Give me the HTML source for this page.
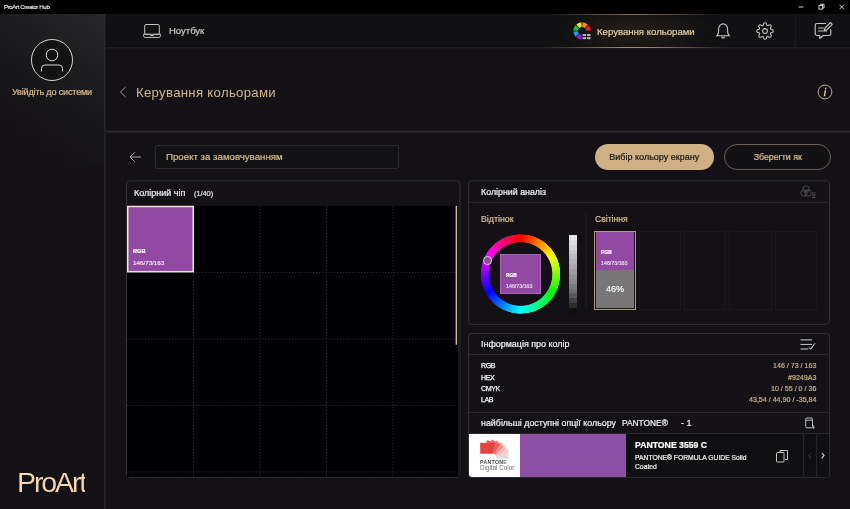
<!DOCTYPE html>
<html lang="uk">
<head>
<meta charset="utf-8">
<title>ProArt Creator Hub</title>
<style>
*{margin:0;padding:0;box-sizing:border-box}
html,body{width:850px;height:509px;overflow:hidden;background:#131116;font-family:"Liberation Sans",sans-serif;color:#e8e8e8}
.abs{position:absolute}
.t{position:absolute;white-space:nowrap;line-height:1;will-change:transform;-webkit-text-stroke:.22px currentColor}
#titlebar{left:0;top:0;width:850px;height:14px;background:#000}
#sidebar{left:0;top:14px;width:104.500px;height:495px;background:linear-gradient(215deg,#282729 0%,#1e1d1f 28%,#171618 55%,#141216 80%) 0 0/104.500px 150px no-repeat,#141216}
#nav{left:105px;top:14px;width:745px;height:34px;background:#111113}
#main{left:105px;top:48px;width:745px;height:461px;background:#131116}
.gold{color:#d8bc8f}
.panel{position:absolute;border:1px solid #333236;border-radius:4px;background:#131116}
.lab{font-size:7.100px;letter-spacing:-.42px;color:#f2f2f2;-webkit-text-stroke:.25px #f2f2f2}
.val{right:33.300px;font-size:7.100px;color:#c9ad80;text-align:right}
</style>
</head>
<body>
<div class="abs" id="titlebar"></div>
<div class="t" style="left:3.800px;top:4.300px;font-size:6.200px;letter-spacing:-.42px;color:#f2f2f2;-webkit-text-stroke:.1px #f2f2f2">ProArt Creator Hub</div>
<!-- window controls -->
<svg class="abs" style="left:790px;top:0" width="60" height="14" viewBox="0 0 60 14" fill="none" stroke="#cfcfcf" stroke-width="1">
  <path d="M8.5 7h5"/>
  <rect x="29" y="5.5" width="3.6" height="3.6"/><path d="M30.4 5.5v-1.2h3.6v3.6h-1.3"/>
  <path d="M49.5 4.8l4.4 4.4M53.9 4.8l-4.4 4.4"/>
</svg>

<div class="abs" id="sidebar"></div>
<div class="abs" id="nav"></div>
<div class="abs" id="main"></div>
<svg class="abs" style="left:0;top:0" width="850" height="509" viewBox="0 0 850 509" fill="none">
  <path d="M104.900 14V509" stroke="#333135"/>
  <path d="M105.500 47.800H850" stroke="#29282b"/>
  <path d="M105.500 131.700H850" stroke="#2d2b30" stroke-width="1.700"/>
  <path d="M795.300 14v33.500" stroke="#1f1e21"/>
  <g fill="#131116" stroke="#343337">
    <rect x="126.500" y="180.900" width="333.400" height="296.500" rx="3"/>
    <rect x="468.600" y="180.900" width="360.900" height="143.400" rx="3"/>
    <rect x="468.600" y="333.400" width="360.800" height="143.900" rx="3"/>
  </g>
  <g stroke="#2c2b2f">
    <path d="M469 202.300H829"/>
    <path d="M469 354.500H829"/>
    <path d="M469 412.400H829"/>
    <path d="M469 433.600H829"/>
    <path d="M585.900 212.700v95.500" stroke="#232126"/>
  </g>
</svg>

<!-- sidebar avatar -->
<svg class="abs" style="left:30px;top:38px" width="44" height="44" viewBox="0 0 44 44" fill="none" stroke="#d9d5cf" stroke-width="1">
  <circle cx="22" cy="22" r="20.500" fill="#121113"/>
  <circle cx="22" cy="17" r="5.800"/>
  <path d="M11.5 33.5v-3.2a3.3 3.3 0 0 1 3.3-3.3h14.4a3.3 3.3 0 0 1 3.3 3.3v3.2"/>
</svg>
<div class="t gold" id="login" style="left:11px;top:88px;font-size:9.100px;letter-spacing:-.18px;width:82px;text-align:center">Увійдіть до системи</div>
<div class="t" id="proart" style="left:17px;top:467.900px;font-size:28.500px;letter-spacing:-2.100px;-webkit-text-stroke:0;background:linear-gradient(#f6dcbc,#f1cfa6);-webkit-background-clip:text;background-clip:text;color:transparent">ProArt</div>

<!-- nav -->
<svg class="abs" style="left:142px;top:23px" width="20" height="16" viewBox="0 0 20 16" fill="none" stroke="#c2c2c2" stroke-width="1">
  <rect x="2.700" y="1.500" width="14.600" height="9.800" rx="1.200"/>
  <path d="M1.500 11.300h6l1 1.200h3l1-1.200h6v1.300a1.800 1.800 0 0 1-1.800 1.800H3.300a1.800 1.800 0 0 1-1.800-1.800z"/>
</svg>
<div class="t" id="notebook" style="left:169px;top:26.200px;font-size:9.500px;color:#cacaca">Ноутбук</div>

<!-- active tab -->
<div class="abs" style="left:555px;top:14px;width:160px;height:34px;background:radial-gradient(ellipse 80px 26px at 50% 50%,rgba(70,55,35,.35),rgba(70,55,35,0) 100%)"></div>
<div class="abs" style="left:545px;top:13.5px;width:180px;height:1px;background:linear-gradient(90deg,rgba(200,165,110,0),rgba(200,165,110,.6) 45%,rgba(200,165,110,.6) 55%,rgba(200,165,110,0))"></div>
<div class="abs" style="left:545px;top:47px;width:180px;height:1px;background:linear-gradient(90deg,rgba(200,165,110,0),rgba(200,165,110,.8) 45%,rgba(200,165,110,.8) 55%,rgba(200,165,110,0))"></div>
<svg class="abs" style="left:570.900px;top:19.800px" width="22" height="22" viewBox="0 0 22 22">
  <g fill="none" stroke-width="4.600">
<path d="M11.39 4.61A6.4 6.4 0 0 1 15.24 6.21" stroke="#f28c1e"/>
<path d="M15.79 6.76A6.4 6.4 0 0 1 17.39 10.61" stroke="#e0222a"/>
<path d="M10.61 17.39A6.4 6.4 0 0 1 6.76 15.79" stroke="#9a1fd0"/>
<path d="M6.21 15.24A6.4 6.4 0 0 1 4.61 11.39" stroke="#1f9be6"/>
<path d="M4.61 10.61A6.4 6.4 0 0 1 6.21 6.76" stroke="#1fc12a"/>
<path d="M6.76 6.21A6.4 6.4 0 0 1 10.61 4.61" stroke="#f4dc25"/>
  </g>
  <g fill="#b4b4b4">
    <rect x="11.600" y="14" width="3.500" height="2.100"/><rect x="16" y="14" width="3.500" height="2.100"/>
    <rect x="11.600" y="17.100" width="3.500" height="2.100"/><rect x="16" y="17.100" width="3.500" height="2.100"/>
  </g>
</svg>
<div class="t gold" id="tabtxt" style="left:597px;top:26.600px;font-size:9.600px;color:#e2cba2">Керування кольорами</div>

<!-- bell -->
<svg class="abs" style="left:715px;top:20.800px" width="16.200" height="19.400" preserveAspectRatio="none" viewBox="0 0 18 20" fill="none" stroke="#c6c6c6" stroke-width="1.200">
  <path d="M2.2 15.2c1.3-1.2 1.8-2.6 1.8-4.8V8a5 5 0 0 1 10 0v2.400c0 2.200.5 3.600 1.800 4.800z"/>
  <path d="M7.300 16.300a1.800 1.800 0 0 0 3.400 0"/>
</svg>
<!-- gear -->
<svg class="abs" style="left:756px;top:22px" width="18" height="18" viewBox="0 0 24 24" fill="none" stroke="#c6c6c6" stroke-width="1.400" stroke-linejoin="round">
  <circle cx="12" cy="12" r="3.2"/>
  <path d="M19.4 15a1.650 1.650 0 0 0 .330 1.820l.060.060a2 2 0 1 1-2.830 2.830l-.060-.060a1.650 1.650 0 0 0-1.820-.330 1.650 1.650 0 0 0-1 1.510V21a2 2 0 0 1-4 0v-.090A1.650 1.650 0 0 0 9 19.400a1.650 1.650 0 0 0-1.820.330l-.060.060a2 2 0 1 1-2.830-2.830l.060-.060a1.650 1.650 0 0 0 .330-1.820 1.650 1.650 0 0 0-1.510-1H3a2 2 0 0 1 0-4h.090A1.650 1.650 0 0 0 4.600 9a1.650 1.650 0 0 0-.330-1.820l-.060-.060a2 2 0 1 1 2.830-2.830l.060.060a1.650 1.650 0 0 0 1.820.330H9a1.650 1.650 0 0 0 1-1.510V3a2 2 0 0 1 4 0v.090a1.650 1.650 0 0 0 1 1.510 1.650 1.650 0 0 0 1.820-.330l.060-.060a2 2 0 1 1 2.830 2.830l-.060.060a1.650 1.650 0 0 0-.330 1.820V9a1.650 1.650 0 0 0 1.510 1H21a2 2 0 0 1 0 4h-.090a1.650 1.650 0 0 0-1.510 1z"/>
</svg>
<!-- feedback -->
<svg class="abs" style="left:813px;top:20px" width="22" height="21" viewBox="0 0 22 21" fill="none" stroke="#c6c6c6" stroke-width="1.1" stroke-linejoin="round" stroke-linecap="round">
  <path d="M12.500 3.500H4a1.800 1.800 0 0 0-1.800 1.800v8.400A1.800 1.800 0 0 0 4 15.500h2.800v3l3.400-3H16a1.800 1.800 0 0 0 1.800-1.800V9.500"/>
  <path d="M5.500 8h5M5.500 11h8"/>
  <path d="M17.500 2.500l1.800 1.800-5.600 5.600-2.300.5.500-2.300z"/>
</svg>

<!-- section title -->
<svg class="abs" style="left:119px;top:86px" width="8" height="12" viewBox="0 0 8 12" fill="none" stroke="#9b9b9b" stroke-width="1"><path d="M6.800 0.800L1.500 6l5.300 5.200"/></svg>
<div class="t gold" id="h1" style="left:136px;top:86.200px;font-size:13.200px;letter-spacing:.3px;-webkit-text-stroke:0;color:#d2b78b">Керування кольорами</div>
<svg class="abs" style="left:817.300px;top:83.600px" width="16" height="16" viewBox="0 0 16 16" fill="none" stroke="#b9aa92" stroke-width="1"><circle cx="8" cy="8" r="6.900"/><path d="M8.700 4.100l-.1.700M8.300 6.600l-.8 5" stroke="#dcc8a4" stroke-width="1.400" stroke-linecap="round"/></svg>

<!-- project row -->
<svg class="abs" style="left:129px;top:151px" width="13" height="12" viewBox="0 0 13 12" fill="none" stroke="#a2a2a2" stroke-width="1"><path d="M12 6H1.200M5.800 1.200L1 6l4.800 4.800"/></svg>
<div class="abs" style="left:155px;top:145px;width:244px;height:24px;border:1px solid #2b2a2e;border-radius:2px;background:#121114"></div>
<div class="t gold" id="proj" style="left:166px;top:152px;font-size:9.7px">Проект за замовчуванням</div>

<div class="abs" id="btn1" style="left:595px;top:144px;width:118.500px;height:26px;border-radius:13px;background:#cfb085"></div>
<div class="t" id="btn1t" style="left:595px;top:152.800px;width:118.500px;text-align:center;font-size:9.0px;color:#1c1a18">Вибір кольору екрану</div>
<div class="abs" id="btn2" style="left:723.500px;top:144px;width:107.500px;height:26px;border-radius:13px;border:1px solid #6d6252;background:#111012"></div>
<div class="t gold" id="btn2t" style="left:723.500px;top:152.800px;width:107.500px;text-align:center;font-size:8.8px">Зберегти як</div>

<!-- left panel -->
<div class="t" id="chipT" style="left:134.300px;top:188.800px;font-size:9.0px;color:#f0f0f0">Колірний чіп</div>
<div class="t" id="chipN" style="left:194px;top:189.800px;font-size:7.300px;color:#e0e0e0">(1/40)</div>
<div class="abs" id="grid" style="left:127px;top:205.500px;width:330.500px;height:271.500px;background:#010002"></div>
<svg class="abs" style="left:127px;top:205.500px" width="333" height="272" viewBox="0 0 333 272" fill="none" stroke="#262628" stroke-width="1" stroke-dasharray="1.500 1.500">
  <path d="M66.500 0v273M133 0v273M199.500 0v273M266 0v273"/>
  <path d="M0 66.500h329M0 133h329M0 199.500h329M0 266h329"/>
</svg>
<div class="abs" style="left:457.500px;top:205.500px;width:2.500px;height:271.500px;background:#181c1c"></div>
<svg class="abs" style="left:450px;top:200px" width="12" height="150" viewBox="0 0 12 150"><rect x="5.600" y="6" width="1.500" height="138.700" fill="#d3bd9a"/></svg>
<svg class="abs" style="left:120px;top:200px" width="80" height="80" viewBox="0 0 80 80"><rect x="7.750" y="6.500" width="65.500" height="65.200" fill="#9249a3" stroke="#e9e1d3" stroke-width="1.500"/></svg>
<div class="t" style="left:132.500px;top:249.200px;font-size:5.600px;font-weight:bold;color:#fff">RGB</div>
<div class="t" style="left:132.500px;top:260px;font-size:6.250px;color:#eadcf0">146/73/163</div>

<!-- analysis panel -->
<div class="t" id="anT" style="left:481.300px;top:187.900px;font-size:8.85px;color:#f0f0f0">Колірний аналіз</div>
<svg class="abs" style="left:800px;top:185px" width="16" height="14" viewBox="0 0 16 14" fill="none" stroke="#4c4b4f" stroke-width="1">
  <circle cx="6" cy="4" r="3.200"/><circle cx="4" cy="8" r="3.200"/><circle cx="8" cy="8" r="3.200"/>
  <path d="M12 8h3.500M12 10.200h3.500M12 12.400h3.500" stroke-width="1.200"/>
</svg>
<div class="t gold" id="hueT" style="left:481px;top:215.200px;font-size:8.8px">Відтінок</div>
<div class="t gold" id="lumT" style="left:595px;top:215.200px;font-size:8.6px">Світіння</div>

<div class="abs" id="wheel" style="left:480.300px;top:233.800px;width:80.600px;height:80.600px;border-radius:50%;background:conic-gradient(#ff0000,#ffff00,#00ff00,#00ffff,#0000ff,#ff00ff,#ff0000);-webkit-mask:radial-gradient(circle closest-side,transparent 0,transparent 78.500%,#000 80.500%,#000 98.500%,transparent 100%);mask:radial-gradient(circle closest-side,transparent 0,transparent 78.500%,#000 80.500%,#000 98.500%,transparent 100%)"></div>
<div class="abs" style="left:500.200px;top:253.600px;width:40.600px;height:40.500px;background:#9249a3;border:1px solid #a766b6"></div>
<div class="t" style="left:505.700px;top:274.300px;font-size:4.800px;font-weight:bold;color:#fff">RGB</div>
<div class="t" style="left:505.500px;top:283.700px;font-size:5.300px;color:#e2cfe8">146/73/163</div>
<div class="abs" style="left:483px;top:256.400px;width:8.800px;height:8.800px;border-radius:50%;background:#9249a3;border:1px solid #e6d8ea"></div>
<div class="abs" id="graybar" style="left:569.400px;top:235px;width:8px;height:78px;background:linear-gradient(#e6e6e6 0 6.25%,#dcdcdc 0 12.5%,#d2d2d2 0 18.75%,#c8c8c8 0 25%,#bdbdbd 0 31.25%,#b3b3b3 0 37.5%,#a9a9a9 0 43.75%,#9e9e9e 0 50%,#939393 0 56.25%,#888 0 62.5%,#7b7b7b 0 68.75%,#6c6c6c 0 75%,#585858 0 81.25%,#424242 0 87.5%,#2a2a2a 0 93.75%,#0e0e0e 0 100%)"></div>

<div class="abs" style="left:594.200px;top:230.700px;width:41.700px;height:79.200px;border:1px solid #b39d78;background:#17161a"></div>
<div class="abs" style="left:596.300px;top:232.300px;width:37.700px;height:76px;background:#787677"></div>
<div class="abs" style="left:596.300px;top:232.300px;width:37.700px;height:37.800px;background:#9249a3"></div>
<div class="t" style="left:601px;top:251.400px;font-size:4.800px;font-weight:bold;color:#fff">RGB</div>
<div class="t" style="left:601px;top:260.900px;font-size:5.300px;color:#e6d4ec">146/73/163</div>
<div class="t" style="left:595px;top:285px;width:40px;text-align:center;font-size:9px;color:#f4f4f4">46%</div>
<div class="abs sw" style="left:638.600px;top:230.700px;width:42.200px;height:79.200px;border:1px solid #1a181d"></div>
<div class="abs sw" style="left:684.200px;top:230.700px;width:42.200px;height:79.200px;border:1px solid #1a181d"></div>
<div class="abs sw" style="left:729.400px;top:230.700px;width:42.200px;height:79.200px;border:1px solid #1a181d"></div>
<div class="abs sw" style="left:774.600px;top:230.700px;width:42.200px;height:79.200px;border:1px solid #1a181d"></div>

<!-- info panel -->
<div class="t" id="infT" style="left:481px;top:339.500px;font-size:8.95px;color:#f0f0f0">Інформація про колір</div>
<svg class="abs" style="left:799px;top:337px" width="18" height="14" viewBox="0 0 18 14" fill="none" stroke="#d0d0d0" stroke-width="1">
  <path d="M1.500 2.900H13M1.500 7.400H13M1.500 12H9.200"/><path d="M10 10.600l1.600 1.600L16 6.200" stroke="#e8e8e8"/>
</svg>
<div class="t lab" style="left:481px;top:363.100px">RGB</div>
<div class="t lab" style="left:481px;top:374.500px">HEX</div>
<div class="t lab" style="left:481px;top:385.900px">CMYK</div>
<div class="t lab" style="left:481px;top:397.300px">LAB</div>
<div class="t val" style="top:363.200px">146 / 73 / 163</div>
<div class="t val" style="top:374.500px">#9249A3</div>
<div class="t val" style="top:386px">10 / 55 / 0 / 36</div>
<div class="t val" style="top:397.300px">43,54 / 44,90 / -35,84</div>
<div class="t" id="optT" style="left:481.300px;top:418.900px;font-size:8.9px;color:#ededed">найбільші доступні опції кольору</div>
<div class="t" id="panT" style="left:622px;top:418.900px;font-size:8.4px;color:#ededed">PANTONE®</div>
<div class="t" style="left:681.300px;top:418.900px;font-size:9px;color:#ededed">- 1</div>
<svg class="abs" style="left:804px;top:416px" width="12" height="14" viewBox="0 0 12 14" fill="none" stroke="#bdbdbd" stroke-width="1">
  <rect x="1.700" y="2" width="6.800" height="9.800" rx="1.200"/><path d="M1.700 4.200h6.800"/><path d="M9.600 9.300v3.200M8.400 11.300l1.200 1.200 1.200-1.200" stroke-width=".9"/>
</svg>
<div class="abs" style="left:469px;top:434px;width:51.200px;height:42.800px;background:#fff;border-bottom-left-radius:3px"></div>
<div class="abs" style="left:520.200px;top:434px;width:106px;height:42.800px;background:#8c51a5"></div>
<div class="abs" style="left:626.200px;top:434px;width:202.800px;height:42.800px;background:#0f0e10;border-bottom-right-radius:3px"></div>
<!-- pantone logo -->
<svg class="abs" style="left:476px;top:436px" width="40" height="26" viewBox="0 0 40 26">
<g transform="rotate(90 16 22.5)"><rect x="6.50" y="6.10" width="9.5" height="16.4" fill="#fff"/><rect x="6.50" y="6.10" width="9.5" height="11.6" fill="#e2dad8"/></g>
<g transform="rotate(75 16 22.5)"><rect x="6.50" y="6.10" width="9.5" height="16.4" fill="#fff"/><rect x="6.50" y="6.10" width="9.5" height="11.6" fill="#f3d0ce"/></g>
<g transform="rotate(60 16 22.5)"><rect x="6.50" y="6.10" width="9.5" height="16.4" fill="#fff"/><rect x="6.50" y="6.10" width="9.5" height="11.6" fill="#f1b5b3"/></g>
<g transform="rotate(45 16 22.5)"><rect x="6.50" y="6.10" width="9.5" height="16.4" fill="#fff"/><rect x="6.50" y="6.10" width="9.5" height="11.6" fill="#ec8f8c"/></g>
<g transform="rotate(30 16 22.5)"><rect x="6.50" y="6.10" width="9.5" height="16.4" fill="#fff"/><rect x="6.50" y="6.10" width="9.5" height="11.6" fill="#e6605c"/></g>
<g transform="rotate(15 16 22.5)"><rect x="6.50" y="6.10" width="9.5" height="16.4" fill="#fff"/><rect x="6.50" y="6.10" width="9.5" height="11.6" fill="#e34a45"/></g>
<g transform="rotate(0 16 22.5)"><rect x="4.20" y="6.80" width="11.8" height="15.7" fill="#fff"/><rect x="4.20" y="6.80" width="11.8" height="10.9" fill="#e8403c"/></g>
</svg>
<div class="t" style="left:480.200px;top:459.900px;font-size:5.200px;font-weight:bold;color:#4a4a4a;letter-spacing:.32px;-webkit-text-stroke:0">PANTON<span style="color:#5f8a72">E</span></div>
<div class="t" style="left:480.200px;top:465px;font-size:6.300px;color:#707070;-webkit-text-stroke:0">Digital Color</div>

<div class="t" id="pname" style="left:634.500px;top:440.500px;font-size:8.7px;font-weight:bold;color:#fff">PANTONE 3559 C</div>
<div class="t" id="pdesc1" style="left:634.500px;top:454.900px;font-size:6.75px;color:#ededed">PANTONE® FORMULA GUIDE Solid</div>
<div class="t" id="pdesc2" style="left:634.500px;top:463.900px;font-size:6.75px;color:#ededed">Coated</div>
<svg class="abs" style="left:775px;top:449px" width="14" height="14" viewBox="0 0 14 14" fill="none" stroke="#c4c4c4" stroke-width="1">
  <path d="M5 3.500V1.500h7.500v9h-2.500"/><rect x="1.500" y="3.500" width="7.500" height="9.500" rx=".8"/>
</svg>
<svg class="abs" style="left:807px;top:451px" width="6" height="9" viewBox="0 0 6 9" fill="none" stroke="#343337" stroke-width="1.100"><path d="M4 2L1.800 4.600 4 7.200"/></svg>
<svg class="abs" style="left:820px;top:451px" width="6" height="9" viewBox="0 0 6 9" fill="none" stroke="#dcdcdc" stroke-width="1.100"><path d="M1.900 2l2.200 2.600-2.200 2.600"/></svg>
<svg class="abs" style="left:0;top:0" width="850" height="509" viewBox="0 0 850 509" fill="none" stroke="#2a292d">
  <path d="M803.600 434v43M816.700 434v43"/>
</svg>
</body>
</html>
